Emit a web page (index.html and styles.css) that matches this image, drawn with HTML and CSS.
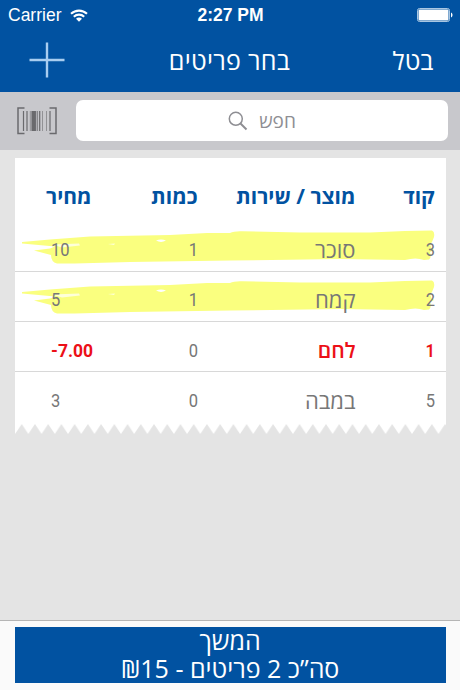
FILE: index.html
```html
<!DOCTYPE html>
<html lang="he" dir="rtl">
  <head>
    <meta charset="UTF-8" />
    <meta name="viewport" content="width=device-width, initial-scale=1.0" />
    <title>בחר פריטים</title>
    <link rel="stylesheet" href="styles.css">
  </head>
  <body>
    <header class="header">
      <div class="status" dir="ltr">
        <div class="status__carrier">
          <span>Carrier</span>
          <svg width="18" height="13" viewBox="0 0 18 13" fill="none" stroke="#fff" stroke-width="2.1">
            <path d="M1 4.8C5.6.5 12.4.5 17 4.8M3.8 7.7c3-2.8 7.4-2.8 10.4 0" />
            <path d="M9 12.8 6 9.7c1.8-1.5 4.2-1.5 6 0z" fill="#fff" stroke="none" />
          </svg>
        </div>
        <span class="status__time">2:27 PM</span>
        <svg class="status__battery" width="36" height="14" viewBox="0 0 36 14">
          <rect x=".5" y=".5" width="32" height="13" rx="2" fill="none" stroke="#a9c6e2" />
          <rect x="1.5" y="1.5" width="30" height="11" rx="1" fill="#fff" />
          <path d="M34 4.5c2 .8 2 4.2 0 5z" fill="#fff" />
        </svg>
      </div>
      <nav class="nav">
        <button class="nav__cancel">בטל</button>
        <h1>בחר פריטים</h1>
        <button class="nav__add">
          <svg width="36" height="36" viewBox="0 0 36 36" stroke="#a9cdf0" stroke-width="2.4">
            <path d="M.5 18h35M18 .5v35" />
          </svg>
        </button>
      </nav>
    </header>

    <div class="search">
      <div class="search__box">
        <span>חפש</span>
        <svg width="20" height="20" viewBox="0 0 20 20" fill="none" stroke="#8e8e93">
          <circle cx="7.8" cy="7.8" r="6.5" stroke-width="1.5" />
          <path d="m12.5 12.5 6 6" stroke-width="2" />
        </svg>
      </div>
      <svg class="search__barcode" width="40" height="28" viewBox="0 0 40 28" fill="none" stroke="#6a6a6d">
        <path d="M7.5 1H1v25.5h6.5M32.5 1H39v25.5h-6.5" stroke-width="1.5" />
        <path d="M6.5 4v20M10 4v20M22.7 4v20M33 4v20" stroke-width="1.2" />
        <path d="M13.3 4v20M25.5 4v20M29.5 4v20" stroke="#929295" />
        <path d="M16.7 4v20" stroke-width="4.5" />
        <path d="M20.3 4v20" stroke="#88888b" stroke-width="1.5" />
      </svg>
    </div>

    <main class="content">
      <section class="receipt">
        <div class="row row--head">
          <span>קוד</span>
          <span>מוצר / שירות</span>
          <span>כמות</span>
          <span>מחיר</span>
        </div>
        <div class="row">
          <svg class="marker" viewBox="15 222 431 49">
            <path id="stroke" d="M22 242 50 239.5 90 236.5 170 235 207 233 230 233Q234 231 242 231.3L300 232.5 370 232.5 405 231 432 230.5Q435 232 434 237L432 242Q428 246 434 250L430 252Q432 257 429 259.5L424 260Q416 257 405 260L340 259 230 260.5 130 262 75 263.5 57 263.5Q51 262 51 255L34 250.5 50 248.5 55 246.5 22 243.5z" fill="#faff7f" />
            <g id="gaps" fill="#fff">
              <path d="M156 240.5Q161 238.7 166 240.5 161 243.3 156 240.5z" />
              <path d="M52 244.5 79 243.5 80 245.5 62 247.5z" opacity=".7" />
              <path d="M108 244 115 243.5 114 245z" opacity=".7" />
            </g>
          </svg>
          <span class="num">3</span>
          <span>סוכר</span>
          <span class="num">1</span>
          <span class="num price">10</span>
        </div>
        <div class="row">
          <svg class="marker" viewBox="15 222 431 49">
            <use href="#stroke" />
            <use href="#gaps" />
          </svg>
          <span class="num">2</span>
          <span>קמח</span>
          <span class="num">1</span>
          <span class="num price">5</span>
        </div>
        <div class="row row--credit">
          <span class="num">1</span>
          <span>לחם</span>
          <span class="num">0</span>
          <span class="num price" dir="ltr">-7.00</span>
        </div>
        <div class="row">
          <span class="num">5</span>
          <span>במבה</span>
          <span class="num">0</span>
          <span class="num price">3</span>
        </div>
      </section>
      <svg class="teeth" width="431" height="10">
        <defs>
          <pattern id="tooth" width="13.23" height="10" patternUnits="userSpaceOnUse" x="-6.5">
            <path d="M0 0h13.23L6.615 10z" fill="#fff" />
          </pattern>
        </defs>
        <rect width="431" height="10" fill="url(#tooth)" />
      </svg>
    </main>

    <footer class="footer">
      <button class="footer__continue">
        המשך<br />
        סה”כ 2 פריטים - <bdo dir="ltr">₪15</bdo>
      </button>
    </footer>
  </body>
</html>
```

FILE: styles.css
```css
* {
  margin: 0;
  padding: 0;
  box-sizing: border-box;
}
body {
  display: flex;
  flex-direction: column;
  height: 100vh;
  overflow: hidden;
  background-color: #e4e4e4;
  font-family: "Open Sans", "Noto Sans", sans-serif;
}
button {
  border: none;
  background: none;
  color: white;
  font-family: inherit;
}
svg {
  display: block;
  flex: none;
}

.header {
  height: 92px;
  background-color: #0152a1;
  color: white;
}
.status {
  display: grid;
  grid-template-columns: 1fr auto 1fr;
  align-items: center;
  height: 30px;
  padding: 0 7px 0 8px;
  font-family: "Liberation Sans", sans-serif;
  font-size: 17.5px;
}
.status__carrier {
  display: flex;
  align-items: center;
  gap: 9px;
}
.status__time {
  font-weight: bold;
}
.status__battery {
  justify-self: end;
}
.nav {
  display: grid;
  grid-template-columns: 94px 1fr 93px;
  align-items: center;
  height: 62px;
  padding-bottom: 3px;
}
.nav h1 {
  font-size: 25px;
  font-weight: 400;
  letter-spacing: 0.3px;
  text-align: center;
}
.nav__cancel {
  font-size: 25px;
}
.nav__add {
  display: flex;
  justify-content: center;
}

.search {
  display: flex;
  align-items: center;
  justify-content: space-between;
  height: 58px;
  padding: 0 12px 1px 17px;
  background-color: #c8c8cc;
}
.search__box {
  display: flex;
  align-items: center;
  justify-content: center;
  gap: 11px;
  width: 372px;
  height: 41px;
  border-radius: 7px;
  background-color: white;
  color: #8e8e93;
  font-size: 19px;
}

.content {
  flex: 1;
  padding: 8px 14.5px 0;
}
.receipt {
  background-color: white;
}
.row {
  position: relative;
  display: grid;
  grid-template-columns: 79px 158px 106px 41px;
  align-items: center;
  height: 50.3px;
  padding: 6px 11px 0 36px;
  border-bottom: 1px solid #d8d8d8;
  color: #777;
  font-size: 22px;
  line-height: 30px;
}
.row span {
  position: relative;
  white-space: nowrap;
}
.row--head {
  height: 63.5px;
  padding-top: 13px;
  border: none;
  color: #0152a1;
  font-size: 21px;
  font-weight: 700;
}
.row:last-child {
  height: 51.5px;
  padding-top: 4px;
  border: none;
}
.row--credit {
  color: #ec1017;
  font-size: 21px;
  font-weight: 600;
}
.row--credit .num:nth-child(3) {
  color: #777;
  font-weight: 400;
}
/* narrow figures */
.row .num {
  padding-top: 2px;
  font-family: Roboto, sans-serif;
  font-size: 19px;
  transform: scaleX(0.87);
  transform-origin: right;
}
.row .price {
  justify-self: end;
  transform-origin: left;
}
.row--credit .price {
  font-weight: 700;
  transform: scaleX(0.92);
}
.marker {
  position: absolute;
  top: 0;
  left: 0;
  width: 431px;
  height: 49px;
}

.footer {
  height: 70px;
  padding: 6px 14.5px 0;
  border-top: 1px solid #b5b5b5;
  background-color: #fafafa;
}
.footer__continue {
  display: block;
  width: 100%;
  height: 56px;
  padding-bottom: 2px;
  background-color: #0152a1;
  font-size: 25px;
  line-height: 27.5px;
}
```
